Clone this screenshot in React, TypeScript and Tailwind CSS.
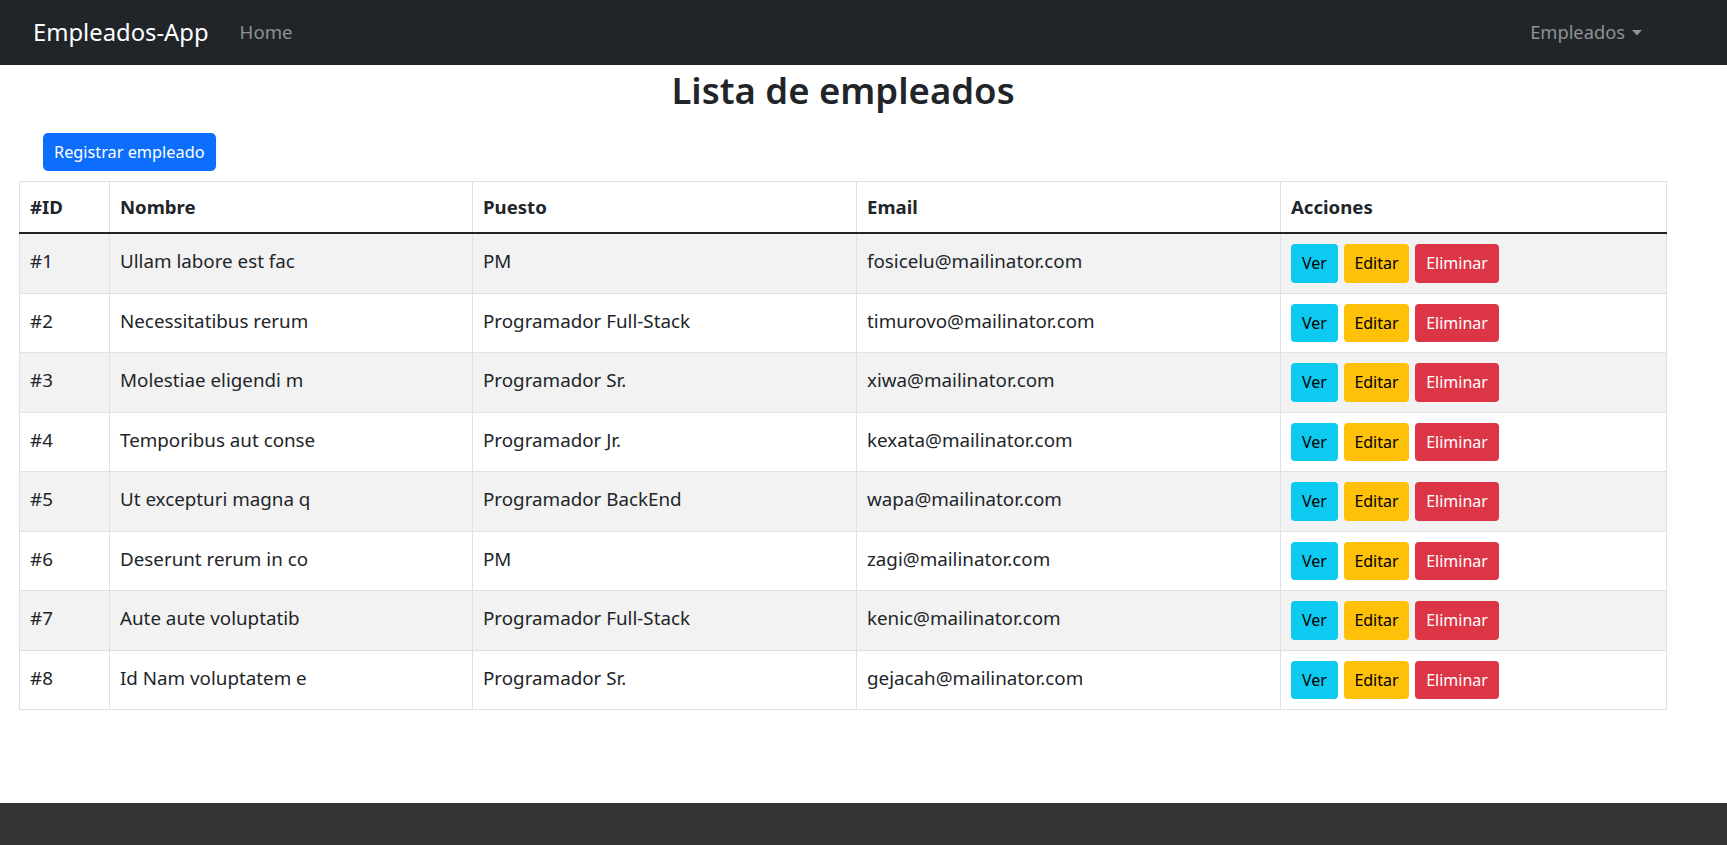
import React from "react";

type Emp = { id: number; nombre: string; puesto: string; email: string };

const empleados: Emp[] = [
  { id: 1, nombre: "Ullam labore est fac", puesto: "PM", email: "fosicelu@mailinator.com" },
  { id: 2, nombre: "Necessitatibus rerum", puesto: "Programador Full-Stack", email: "timurovo@mailinator.com" },
  { id: 3, nombre: "Molestiae eligendi m", puesto: "Programador Sr.", email: "xiwa@mailinator.com" },
  { id: 4, nombre: "Temporibus aut conse", puesto: "Programador Jr.", email: "kexata@mailinator.com" },
  { id: 5, nombre: "Ut excepturi magna q", puesto: "Programador BackEnd", email: "wapa@mailinator.com" },
  { id: 6, nombre: "Deserunt rerum in co", puesto: "PM", email: "zagi@mailinator.com" },
  { id: 7, nombre: "Aute aute voluptatib", puesto: "Programador Full-Stack", email: "kenic@mailinator.com" },
  { id: 8, nombre: "Id Nam voluptatem e", puesto: "Programador Sr.", email: "gejacah@mailinator.com" },
];

export default function App() {
  return (
    <div className="min-h-screen flex flex-col bg-white text-[#212529] font-['Noto_Sans',sans-serif]">
      <nav className="h-[65px] bg-[#212529] flex items-center pl-[33px] pr-[85px]">
        <span className="text-white text-[23.8px] leading-none">Empleados-App</span>
        <span className="ml-[31px] text-[18.6px] text-[#8f9193] leading-none">Home</span>
        <div className="ml-auto flex items-center text-[18.3px] text-[#8f9193] leading-none">
          <span>Empleados</span>
          <svg width="10" height="6" viewBox="0 0 10 6" className="ml-[7px] mt-[1px]">
            <path d="M0 0 L10 0 L5 5.5 Z" fill="#8f9193" />
          </svg>
        </div>
      </nav>

      <main className="flex-1 pl-[19px] pr-[60px]">
        <h1 className="mt-[4px] text-center text-[36.5px] leading-[43px] font-semibold">
          Lista de empleados
        </h1>
        <div className="mt-[21px] pl-[24px]">
          <button className="h-[38px] px-[11px] rounded-[5px] bg-[#0d6efd] text-white text-[16.3px] leading-none">
            Registrar empleado
          </button>
        </div>
        <table className="mt-[10px] w-full table-fixed border-collapse border border-[#dee2e6]">
          <thead>
            <tr>
              <th className="w-[90px] text-left font-bold text-[18.6px] leading-[28px] py-[11px] px-[10px] border border-[#dee2e6] border-b-2 border-b-[#212529]">#ID</th>
              <th className="w-[363px] text-left font-bold text-[18.6px] leading-[28px] py-[11px] px-[10px] border border-[#dee2e6] border-b-2 border-b-[#212529]">Nombre</th>
              <th className="w-[384px] text-left font-bold text-[18.6px] leading-[28px] py-[11px] px-[10px] border border-[#dee2e6] border-b-2 border-b-[#212529]">Puesto</th>
              <th className="w-[424px] text-left font-bold text-[18.6px] leading-[28px] py-[11px] px-[10px] border border-[#dee2e6] border-b-2 border-b-[#212529]">Email</th>
              <th className="text-left font-bold text-[18.6px] leading-[28px] py-[11px] px-[10px] border border-[#dee2e6] border-b-2 border-b-[#212529]">Acciones</th>
            </tr>
          </thead>
          <tbody>
            {empleados.map((e, i) => (
              <tr key={e.id} className={i % 2 === 0 ? "bg-[#f2f2f2]" : "bg-white"}>
                <td className="align-middle text-[18.8px] leading-[28px] pt-[8px] pb-[12px] px-[10px] border border-[#dee2e6]">#{e.id}</td>
                <td className="align-middle text-[18.8px] leading-[28px] pt-[8px] pb-[12px] px-[10px] border border-[#dee2e6]">{e.nombre}</td>
                <td className="align-middle text-[18.8px] leading-[28px] pt-[8px] pb-[12px] px-[10px] border border-[#dee2e6]">{e.puesto}</td>
                <td className="align-middle text-[18.8px] leading-[28px] pt-[8px] pb-[12px] px-[10px] border border-[#dee2e6]">{e.email}</td>
                <td className="align-middle py-[10px] px-[10px] border border-[#dee2e6]">
                  <div className="flex gap-[6px]">
                    <button className="h-[38.5px] w-[47px] rounded-[4px] bg-[#0dcaf0] text-black text-[16px] leading-none">Ver</button>
                    <button className="h-[38.5px] w-[65px] rounded-[4px] bg-[#ffc107] text-black text-[16px] leading-none">Editar</button>
                    <button className="h-[38.5px] w-[84px] rounded-[4px] bg-[#dc3545] text-white text-[16px] leading-none">Eliminar</button>
                  </div>
                </td>
              </tr>
            ))}
          </tbody>
        </table>
      </main>

      <footer className="h-[42px] bg-[#333436]" />
    </div>
  );
}
